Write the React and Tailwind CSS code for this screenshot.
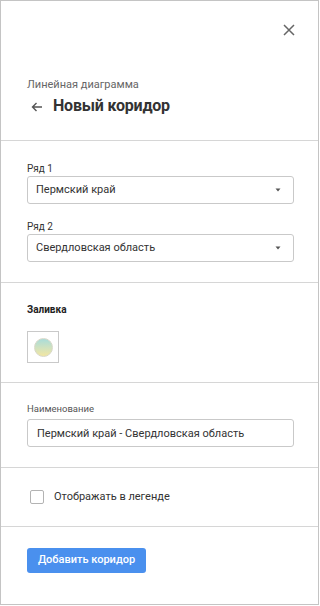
import { useState } from 'react'

const Caret = () => (
  <svg width="6" height="4" viewBox="0 0 6 4" className="shrink-0">
    <path d="M0.5 0.5 L5.5 0.5 L3 3.5 Z" fill="#555" />
  </svg>
)

const SelectBox = ({ value }) => (
  <div className="flex items-center justify-between h-[28px] border border-[#c9c9c9] rounded-[3px] pl-[8px] pr-[12px]">
    <span className="text-[11px] text-[#333]">{value}</span>
    <Caret />
  </div>
)

const App = () => {
  const [showLegend, setShowLegend] = useState(false)
  const [name, setName] = useState('Пермский край - Свердловская область')

  return (
    <div className="w-[319px] h-[605px] border border-[#c4c4c4] bg-white flex flex-col" style={{ fontFamily: 'Roboto, "Noto Sans", sans-serif' }}>
      {/* header */}
      <div className="h-[140px] border-b border-[#d6d6d6] shrink-0 flex flex-col">
        <div className="flex justify-end pr-[23px] pt-[23px]">
          <svg width="12" height="12" viewBox="0 0 12 12">
            <path d="M1 1 L11 11 M11 1 L1 11" stroke="#666" strokeWidth="1.5" />
          </svg>
        </div>
        <div className="pl-[26px] mt-[42px] text-[11px] leading-[14px] text-[#666]">Линейная диаграмма</div>
        <div className="pl-[30px] mt-[4px] flex items-center h-[20px]">
          <svg width="12" height="10" viewBox="0 0 12 10" className="mt-[2px]">
            <path d="M11 5 L1.5 5 M5.5 1 L1.5 5 L5.5 9" stroke="#555" strokeWidth="1.4" fill="none" />
          </svg>
          <span className="ml-[10px] text-[16px] font-bold text-[#333] tracking-[-0.2px]">Новый коридор</span>
        </div>
      </div>

      {/* rows */}
      <div className="h-[142px] border-b border-[#d6d6d6] shrink-0 pl-[26px] pr-[24px] pt-[22px]">
        <div className="text-[10px] leading-[12px] text-[#333]">Ряд 1</div>
        <div className="mt-[1px]">
          <SelectBox value="Пермский край" />
        </div>
        <div className="mt-[17px] text-[10px] leading-[12px] text-[#333]">Ряд 2</div>
        <div className="mt-[1px]">
          <SelectBox value="Свердловская область" />
        </div>
      </div>

      {/* fill */}
      <div className="h-[100px] border-b border-[#d6d6d6] shrink-0 pl-[26px] pr-[24px] pt-[21px]">
        <div className="text-[10px] leading-[12px] font-bold text-[#222]">Заливка</div>
        <div className="mt-[15px] w-[32px] h-[32px] border border-[#c9c9c9] flex items-center justify-center">
          <div className="w-[19px] h-[19px] rounded-full bg-gradient-to-b from-[#a9dcd9] to-[#f2e6a2] border border-[#d8d8c8]" />
        </div>
      </div>

      {/* name */}
      <div className="h-[85px] border-b border-[#d6d6d6] shrink-0 pl-[26px] pr-[24px] pt-[20px]">
        <div className="text-[9.5px] leading-[12px] text-[#555]">Наименование</div>
        <input
          value={name}
          onChange={(e) => setName(e.target.value)}
          className="mt-[4px] w-full h-[28px] border border-[#c9c9c9] rounded-[3px] pl-[9px] text-[11px] text-[#333] outline-none"
        />
      </div>

      {/* legend */}
      <div className="h-[59px] border-b border-[#d6d6d6] shrink-0 pl-[29px] flex items-center">
        <button
          onClick={() => setShowLegend(!showLegend)}
          className="w-[14px] h-[14px] rounded-[2px] border-[1.5px] border-[#b3b3b3] bg-white"
        />
        <span className="ml-[10px] text-[11px] text-[#333]">Отображать в легенде</span>
      </div>

      {/* action */}
      <div className="px-[26px] pt-[19px]">
        <button className="h-[25px] w-[119px] rounded-[3px] bg-[#4a90ee] text-white text-[11px] font-medium">
          Добавить коридор
        </button>
      </div>
    </div>
  )
}

export default App
